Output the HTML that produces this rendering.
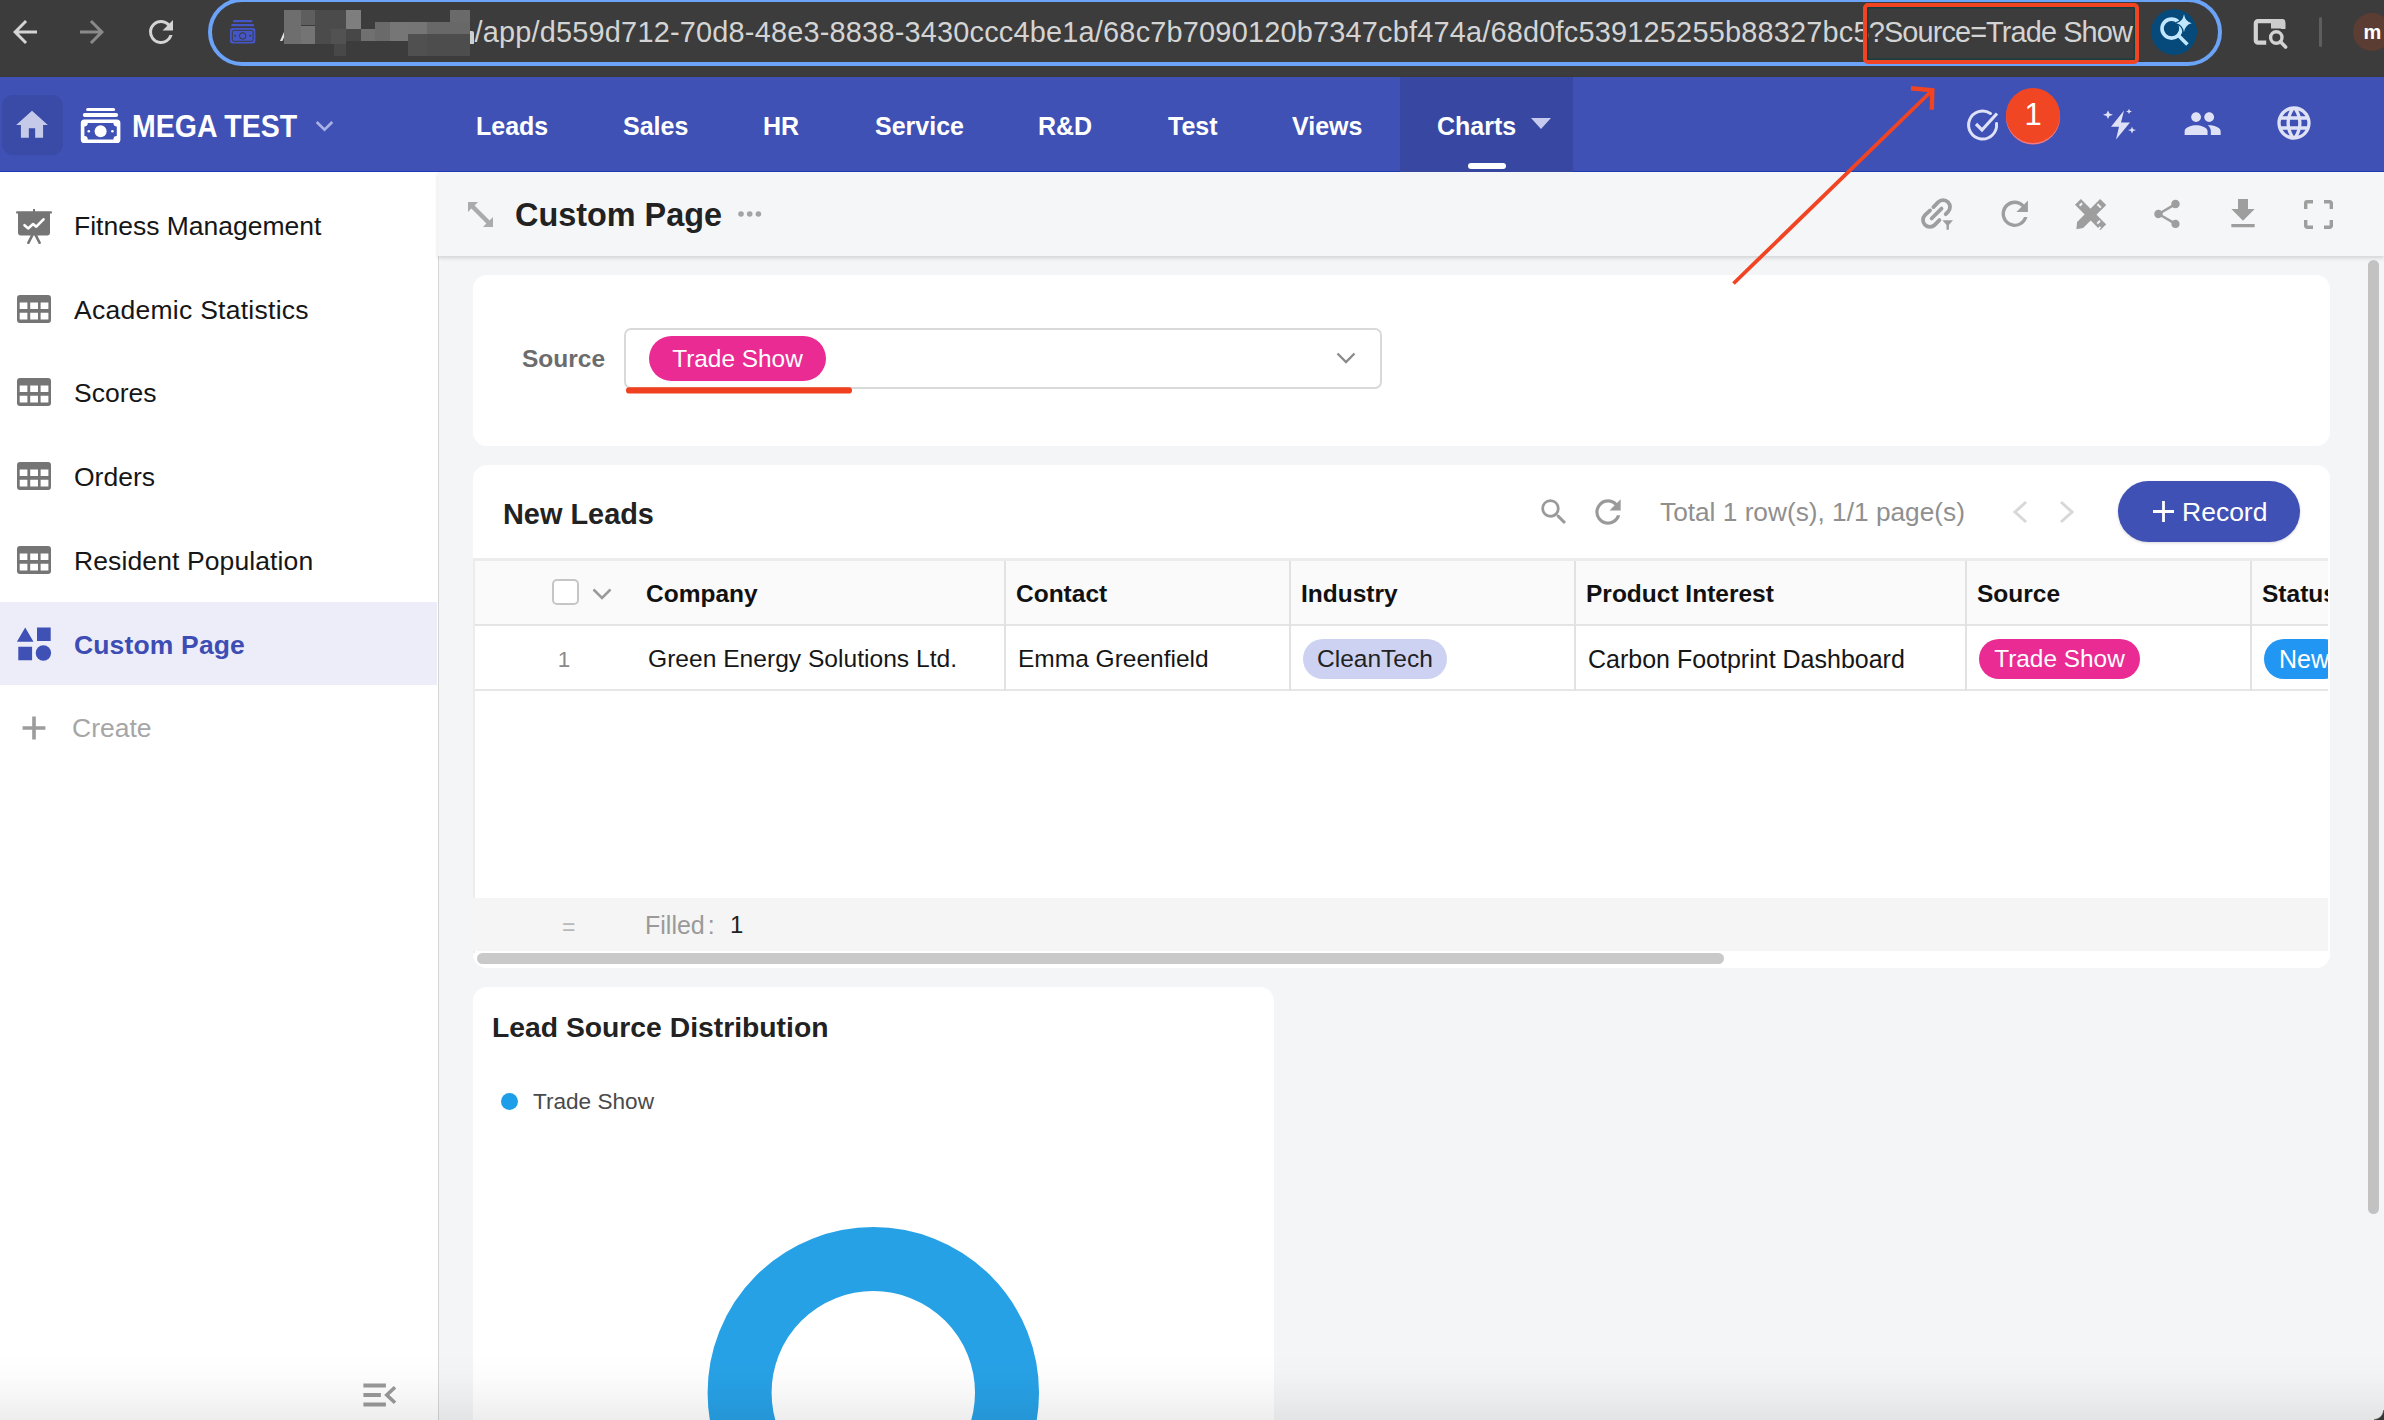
<!DOCTYPE html>
<html lang="en">
<head>
<meta charset="utf-8">
<title>Custom Page</title>
<style>
*{box-sizing:border-box;margin:0;padding:0}
html,body{width:2384px;height:1420px;overflow:hidden;background:#f4f5f7;font-family:"Liberation Sans",Arial,sans-serif;color:#151515}
.abs{position:absolute}
#chrome{position:absolute;left:0;top:0;width:2384px;height:77px;background:#3c3c3c}
#urlbar{position:absolute;left:208px;top:-2px;width:2014px;height:68px;border:4px solid #6ba3f8;border-radius:35px;background:#3c3c3c}
#urltext{position:absolute;left:474.500px;top:15px;font-size:28.9px;line-height:34px;color:#d4d4d4;white-space:nowrap;letter-spacing:0.203px}
#urltext b{font-weight:400;letter-spacing:-0.890px;margin-left:-1px}
#appbar{position:absolute;left:0;top:77px;width:2384px;height:95px;background:#3f51b5;border-bottom:1.500px solid #2039b6;box-shadow:0 2px 4px rgba(0,0,0,.22)}
#homebtn{position:absolute;left:1.500px;top:17.600px;width:61px;height:60.700px;border-radius:11px;background:#3a4aa7}
.nav{position:absolute;top:34px;font-size:25px;font-weight:700;color:#fff;line-height:30px;white-space:nowrap}
#appname{position:absolute;left:132px;top:30.500px;font-size:30.500px;font-weight:700;color:#fff;line-height:36px;white-space:nowrap;transform:scaleX(.934);transform-origin:0 50%}
#activetab{position:absolute;left:1400px;top:0;width:173px;height:95px;background:#3848a2}
#activeline{position:absolute;left:1468px;top:86px;width:38px;height:6px;border-radius:3px;background:#fff}
#sidebar{position:absolute;left:0;top:172px;width:438.500px;height:1248px;background:#fff;border-right:1.500px solid #d6d6d6}
.sitem{position:absolute;left:0;width:437px;height:84px}
.sitem span{position:absolute;left:74px;top:27px;font-size:26.5px;line-height:32px;color:#161616;white-space:nowrap}
.sitem svg{position:absolute;left:16px;top:25px}
#sel{background:#ededf9;height:83px}
#sel span{color:#3d4db3;font-weight:700}
#pagehead{position:absolute;left:438px;top:172px;width:1946px;height:84px;background:#f5f6f8;box-shadow:0 2px 4px rgba(0,0,0,.14)}
#pagetitle{position:absolute;left:77px;top:24px;font-size:32.400px;font-weight:700;color:#222;line-height:38px;white-space:nowrap}
.card{position:absolute;background:#fff;border-radius:14px}
.pill{position:absolute;border-radius:40px;color:#fff;white-space:nowrap;text-align:center}
.th{position:absolute;top:20px;font-size:24.5px;font-weight:700;color:#111;line-height:30px;white-space:nowrap}
.td{position:absolute;top:19px;font-size:25px;color:#161616;line-height:30px;white-space:nowrap}
.vline{position:absolute;top:0;width:1.600px;height:130px;background:#e2e2e2}
</style>
</head>
<body>

<!-- ================= BROWSER CHROME ================= -->
<div id="chrome">
  <svg class="abs" style="left:6.500px;top:14px" width="36" height="36" viewBox="0 0 24 24"><path d="M20 11H7.8l5.6-5.6L12 4l-8 8 8 8 1.4-1.4L7.8 13H20z" fill="#d4d4d4"/></svg>
  <svg class="abs" style="left:74px;top:14px" width="36" height="36" viewBox="0 0 24 24"><path d="M4 11h12.2l-5.6-5.6L12 4l8 8-8 8-1.4-1.4 5.6-5.6H4z" fill="#8a8a8a"/></svg>
  <svg class="abs" style="left:143px;top:14px" width="36" height="36" viewBox="0 0 24 24"><path d="M17.65 6.35A7.95 7.95 0 0 0 12 4a8 8 0 1 0 7.73 10h-2.08A6 6 0 1 1 12 6c1.66 0 3.14.69 4.22 1.78L13 11h7V4z" fill="#d4d4d4"/></svg>
  <div id="urlbar"></div>
  <!-- favicon -->
  <svg class="abs" style="left:230px;top:20px" width="26" height="24" viewBox="0 0 26 24"><rect x="3" y="0" width="19.500" height="2.200" rx="1" fill="#4456c8"/><rect x="1.200" y="4" width="23" height="2.200" rx="1" fill="#4456c8"/><rect x="0" y="8" width="25.400" height="15.600" rx="2.400" fill="#4456c8"/><rect x="2.300" y="10.300" width="20.800" height="11" rx="1.500" fill="none" stroke="#3c3c3c" stroke-width="1"/><circle cx="12.700" cy="15.800" r="3.600" fill="#3c3c3c"/><circle cx="12.700" cy="15.800" r="2.600" fill="#4456c8"/><circle cx="5.200" cy="15.800" r="1" fill="#3c3c3c"/><circle cx="20.200" cy="15.800" r="1" fill="#3c3c3c"/></svg>
  <!-- pixelated host -->
  <div class="abs" style="left:0;top:0;width:520px;height:70px;overflow:hidden">
    <div class="abs" style="left:280px;top:31px;width:8px;height:10px;background:#e4e4e4;clip-path:polygon(55% 0,100% 0,100% 100%,70% 100%,60% 45%,30% 100%,0 100%)"></div>
    <div class="abs" style="left:283.9px;top:10.1px;width:17.4px;height:33.6px;background:#6e6e6e"></div>
    <div class="abs" style="left:301.3px;top:10.1px;width:13.4px;height:15.4px;background:#5e5e5e"></div>
    <div class="abs" style="left:301.3px;top:25.5px;width:13.4px;height:18.1px;background:#747474"></div>
    <div class="abs" style="left:314.8px;top:10.1px;width:30.9px;height:33.6px;background:#4b4b4b"></div>
    <div class="abs" style="left:330.9px;top:28.9px;width:14.8px;height:14.8px;background:#525252"></div>
    <div class="abs" style="left:334.2px;top:43.6px;width:11.4px;height:12.1px;background:#484848"></div>
    <div class="abs" style="left:345.6px;top:10.1px;width:15.4px;height:18.8px;background:#7e7e7e"></div>
    <div class="abs" style="left:345.6px;top:28.9px;width:15.4px;height:12.1px;background:#474747"></div>
    <div class="abs" style="left:361.1px;top:28.9px;width:14.1px;height:12.1px;background:#707070"></div>
    <div class="abs" style="left:375.2px;top:22.1px;width:14.8px;height:18.8px;background:#6a6a6a"></div>
    <div class="abs" style="left:389.9px;top:22.1px;width:18.1px;height:18.8px;background:#767676"></div>
    <div class="abs" style="left:408.1px;top:22.1px;width:18.8px;height:12.1px;background:#757575"></div>
    <div class="abs" style="left:408.1px;top:34.2px;width:18.8px;height:21.5px;background:#505050"></div>
    <div class="abs" style="left:426.8px;top:22.1px;width:43.0px;height:12.1px;background:#686868"></div>
    <div class="abs" style="left:426.8px;top:34.2px;width:43.0px;height:21.5px;background:#4d4d4d"></div>
    <div class="abs" style="left:449.7px;top:10.1px;width:20.1px;height:12.1px;background:#6a6a6a"></div>
  </div>
  <div class="abs" style="left:470px;top:31px;width:3.500px;height:13px;background:#cfcfcf;border-radius:0 2px 0 0"></div>
  <div id="urltext">/app/d559d712-70d8-48e3-8838-3430ccc4be1a/68c7b7090120b7347cbf474a/68d0fc539125255b88327bc5<b>?Source=Trade Show</b></div>
  <!-- red highlight box -->
  <div class="abs" style="left:1863px;top:3px;width:276px;height:61px;border:4px solid #f04423;border-radius:5px;box-shadow:inset 0 0 0 1.5px #163c3c"></div>
  <!-- lens icon -->
  <div class="abs" style="left:2151.100px;top:8.900px;width:46px;height:46px;border-radius:23px;background:#054a7a"></div>
  <svg class="abs" style="left:2156px;top:13px" width="40" height="38" viewBox="0 0 40 38"><circle cx="15.500" cy="15.600" r="9.500" fill="none" stroke="#c2e7ff" stroke-width="3.600"/><path d="M22.200 22.300L31.400 31.500" stroke="#c2e7ff" stroke-width="3.600" fill="none"/><path d="M28 1.300Q29.300 8.900 35.700 10.200Q29.300 11.500 28 19.100Q26.700 11.500 20.300 10.200Q26.700 8.900 28 1.300z" fill="#c2e7ff" stroke="#054a7a" stroke-width="2.600" paint-order="stroke"/></svg>
  <!-- cast/search icon -->
  <svg class="abs" style="left:2250px;top:16px" width="40" height="36" viewBox="0 0 40 36"><path d="M16.200 26.600H8a2.200 2.200 0 0 1-2.200-2.200V7.400a2.200 2.200 0 0 1 2.200-2.200H31a2.200 2.200 0 0 1 2.200 2.200V13" fill="none" stroke="#d2d2d2" stroke-width="4.200"/><path d="M21 3.100h11.300a3 3 0 0 1 3 3v6.500H21z" fill="#cdcdcd"/><circle cx="26.300" cy="21.500" r="5.700" fill="#3c3c3c" stroke="#d2d2d2" stroke-width="3.400"/><path d="M30.300 25.600L35.600 31" stroke="#d2d2d2" stroke-width="3.600" stroke-linecap="round"/></svg>
  <div class="abs" style="left:2319px;top:17px;width:3px;height:30px;background:#5e5e5e;border-radius:2px"></div>
  <div class="abs" style="left:2352.600px;top:12.500px;width:38.700px;height:38.700px;border-radius:20px;background:#5c3d33"></div>
  <div class="abs" style="left:2363.500px;top:14.500px;font-size:20px;font-weight:700;line-height:34px;color:#fff">m</div>
</div>

<!-- ================= APP BAR ================= -->
<div id="appbar">
  <div id="homebtn"></div>
  <svg class="abs" style="left:13px;top:28.500px" width="38" height="38" viewBox="0 0 24 24"><path d="M10 20v-6h4v6h5v-8h3L12 3 2 12h3v8z" fill="#c5cae9"/></svg>
  <!-- money icon -->
  <svg class="abs" style="left:80px;top:28px" width="42" height="40" viewBox="0 0 42 40"><rect x="6.100" y="2.900" width="29" height="3" rx="1.500" fill="#fff"/><rect x="2.800" y="8" width="35.300" height="4" rx="2" fill="#fff"/><rect x="0.800" y="14.500" width="39.600" height="23.500" rx="3.600" fill="#fff"/><path d="M7.800 18h25.600a3.400 3.400 0 0 0 3.400 3.400v9.600a3.400 3.400 0 0 0-3.400 3.400H7.800a3.400 3.400 0 0 0-3.400-3.400v-9.600A3.400 3.400 0 0 0 7.800 18z" fill="#3f51b5"/><circle cx="20.600" cy="26.200" r="6" fill="#fff"/><circle cx="8.800" cy="26.200" r="1.300" fill="#fff"/><circle cx="32.400" cy="26.200" r="1.300" fill="#fff"/></svg>
  <div id="appname">MEGA TEST</div>
  <svg class="abs" style="left:315px;top:42.500px" width="19" height="12" viewBox="0 0 19 12"><path d="M1.700 2l7.800 7.600L17.300 2" fill="none" stroke="#aab2e4" stroke-width="2.700"/></svg>
  <div id="activetab"></div>
  <div class="nav" style="left:476px">Leads</div>
  <div class="nav" style="left:623px">Sales</div>
  <div class="nav" style="left:763px">HR</div>
  <div class="nav" style="left:875px">Service</div>
  <div class="nav" style="left:1038px">R&amp;D</div>
  <div class="nav" style="left:1168px">Test</div>
  <div class="nav" style="left:1292px">Views</div>
  <div class="nav" style="left:1437px">Charts</div>
  <svg class="abs" style="left:1531px;top:41px" width="20" height="12" viewBox="0 0 20 12"><path d="M0 0h20L10 11z" fill="#c5caee"/></svg>
  <div id="activeline"></div>
  <!-- right icons -->
  <svg class="abs" style="left:1965px;top:30px" width="36" height="36" viewBox="0 0 36 36"><path d="M31.5 16.5a14 14 0 1 1-6-10" fill="none" stroke="#dfe2f6" stroke-width="3" stroke-linecap="round"/><path d="M11 17l6 6L32 6.5" fill="none" stroke="#dfe2f6" stroke-width="3.2"/></svg>
  <div class="abs" style="left:2006px;top:11px;width:54px;height:55px;border-radius:28px;background:#f04623;box-shadow:0 1.500px 0 #f27a80"></div>
  <div class="abs" style="left:2006px;top:18px;width:54px;text-align:center;font-size:31px;line-height:40px;color:#fff">1</div>
  <svg class="abs" style="left:2102px;top:30.800px" width="36" height="34" viewBox="0 0 36 40" preserveAspectRatio="none"><path d="M22 3L9 22h8l-3 15 14-20h-9z" fill="#dfe2f6"/><path d="M6 3l1.4 3.6L11 8l-3.6 1.4L6 13 4.600 9.400 1 8l3.600-1.400z" fill="#dfe2f6"/><path d="M27 1l.9 2.100L30 4l-2.100.9L27 7l-.9-2.100L24 4l2.100-.9z" fill="#dfe2f6"/><path d="M30 22l1.100 2.900L34 26l-2.900 1.100L30 30l-1.100-2.900L26 26l2.900-1.100z" fill="#dfe2f6"/></svg>
  <svg class="abs" style="left:2183.200px;top:26.600px" width="39.300" height="39.300" viewBox="0 0 24 24"><path d="M16 11c1.660 0 2.990-1.340 2.990-3S17.660 5 16 5c-1.660 0-3 1.340-3 3s1.340 3 3 3zm-8 0c1.660 0 2.990-1.340 2.990-3S9.660 5 8 5C6.340 5 5 6.340 5 8s1.340 3 3 3zm0 2c-2.330 0-7 1.170-7 3.500V19h14v-2.500c0-2.330-4.670-3.500-7-3.500zm8 0c-.29 0-.62.020-.97.050 1.160.84 1.970 1.970 1.970 3.450V19h6v-2.500c0-2.330-4.670-3.500-7-3.500z" fill="#dfe2f6"/></svg>
  <svg class="abs" style="left:2274px;top:26px" width="40" height="40" viewBox="0 0 24 24"><path d="M11.990 2C6.470 2 2 6.480 2 12s4.470 10 9.990 10C17.520 22 22 17.520 22 12S17.520 2 11.990 2zm6.930 6h-2.950a15.650 15.650 0 0 0-1.380-3.560A8.030 8.030 0 0 1 18.920 8zM12 4.040c.83 1.200 1.480 2.530 1.910 3.960h-3.820c.43-1.430 1.080-2.760 1.910-3.960zM4.260 14C4.100 13.360 4 12.690 4 12s.1-1.360.26-2h3.380c-.08.660-.14 1.320-.14 2 0 .68.060 1.340.14 2H4.260zm.82 2h2.950c.32 1.250.78 2.450 1.380 3.560A7.990 7.990 0 0 1 5.080 16zm2.950-8H5.080a7.990 7.990 0 0 1 4.330-3.560A15.650 15.650 0 0 0 8.030 8zM12 19.960c-.83-1.200-1.480-2.530-1.910-3.960h3.820c-.43 1.430-1.080 2.760-1.910 3.960zM14.340 14H9.660c-.09-.66-.16-1.320-.16-2 0-.68.070-1.350.16-2h4.680c.09.650.16 1.320.16 2 0 .68-.07 1.340-.16 2zm.25 5.560c.6-1.110 1.060-2.310 1.380-3.560h2.950a8.030 8.030 0 0 1-4.330 3.560zM16.360 14c.08-.66.140-1.320.14-2 0-.68-.06-1.340-.14-2h3.380c.16.640.26 1.310.26 2s-.1 1.360-.26 2h-3.380z" fill="#dfe2f6"/></svg>
</div>

<!-- ================= SIDEBAR ================= -->
<div id="sidebar">
  <div class="sitem" style="top:11px"><svg width="36" height="36" viewBox="0 0 36 36" style="left:16px;top:26px"><path fill="#757575" d="M17 0h2v2.200h15.800a1.200 1.200 0 0 1 0 2.400H34v19.400a2.400 2.400 0 0 1-2.400 2.400H21.300l3.500 6.800a1.300 1.300 0 0 1-2.300 1.200L18.400 26.600h-.8L13.500 34.400a1.300 1.300 0 0 1-2.300-1.200l3.500-6.800H4.400A2.400 2.400 0 0 1 2 24V4.600H1.200a1.200 1.200 0 0 1 0-2.400H17z"/><path d="M8.500 16.200l3.600 3.200 5-4.300 3.200 2.600 7.200-7.400" fill="none" stroke="#fff" stroke-width="2.600" stroke-linecap="round" stroke-linejoin="round"/></svg><span>Fitness Management</span></div>
  <div class="sitem" style="top:95px"><svg width="34" height="28" viewBox="0 0 34 28" style="left:17px;top:28px"><path fill-rule="evenodd" fill="#757575" d="M3 0h28a3 3 0 0 1 3 3v22a3 3 0 0 1-3 3H3a3 3 0 0 1-3-3V3a3 3 0 0 1 3-3zM2.700 7.400v6.600h7.700V7.400zM13.200 7.400v6.600h7.800V7.400zM23.600 7.400v6.600h7.800V7.400zM2.700 17.800v6.800h7.700v-6.800zM13.200 17.800v6.800h7.800v-6.800zM23.600 17.800v6.800h7.800v-6.800z"/></svg><span style="letter-spacing:.27px">Academic Statistics</span></div>
  <div class="sitem" style="top:178px"><svg width="34" height="28" viewBox="0 0 34 28" style="left:17px;top:28px"><path fill-rule="evenodd" fill="#757575" d="M3 0h28a3 3 0 0 1 3 3v22a3 3 0 0 1-3 3H3a3 3 0 0 1-3-3V3a3 3 0 0 1 3-3zM2.700 7.400v6.600h7.700V7.400zM13.200 7.400v6.600h7.800V7.400zM23.600 7.400v6.600h7.800V7.400zM2.700 17.800v6.800h7.700v-6.800zM13.200 17.800v6.800h7.800v-6.800zM23.600 17.800v6.800h7.800v-6.800z"/></svg><span>Scores</span></div>
  <div class="sitem" style="top:262px"><svg width="34" height="28" viewBox="0 0 34 28" style="left:17px;top:28px"><path fill-rule="evenodd" fill="#757575" d="M3 0h28a3 3 0 0 1 3 3v22a3 3 0 0 1-3 3H3a3 3 0 0 1-3-3V3a3 3 0 0 1 3-3zM2.700 7.400v6.600h7.700V7.400zM13.200 7.400v6.600h7.800V7.400zM23.600 7.400v6.600h7.800V7.400zM2.700 17.800v6.800h7.700v-6.800zM13.200 17.800v6.800h7.800v-6.800zM23.600 17.800v6.800h7.800v-6.800z"/></svg><span>Orders</span></div>
  <div class="sitem" style="top:346px"><svg width="34" height="28" viewBox="0 0 34 28" style="left:17px;top:28px"><path fill-rule="evenodd" fill="#757575" d="M3 0h28a3 3 0 0 1 3 3v22a3 3 0 0 1-3 3H3a3 3 0 0 1-3-3V3a3 3 0 0 1 3-3zM2.700 7.400v6.600h7.700V7.400zM13.200 7.400v6.600h7.800V7.400zM23.600 7.400v6.600h7.800V7.400zM2.700 17.800v6.800h7.700v-6.800zM13.200 17.800v6.800h7.800v-6.800zM23.600 17.800v6.800h7.800v-6.800z"/></svg><span style="letter-spacing:.11px">Resident Population</span></div>
  <div class="sitem" id="sel" style="top:430px"><svg width="36" height="36" viewBox="0 0 36 36" style="left:16px;top:24px"><path fill="#3f51b5" d="M9.200 1.600L17.500 15.700H.900zM21 1.600h13.700v13.500H21zM2.300 20.800h13.800v13.500H2.300z"/><circle cx="27.400" cy="27" r="7.700" fill="#3f51b5"/></svg><span style="letter-spacing:.15px">Custom Page</span></div>
  <div class="sitem" style="top:514px"><svg width="24" height="24" viewBox="0 0 24 24" style="left:22px;top:30px"><path d="M12 .6v22.800M.6 12h22.800" stroke="#9c9c9c" stroke-width="3.600" fill="none"/></svg><span style="color:#a6a6a6;left:72px;top:26px">Create</span></div>
  <svg class="abs" style="left:362px;top:1211px" width="36" height="24" viewBox="0 0 36 24"><path d="M1.400 2.500h22.500M1.400 12h17.500M1.400 21.500h22.500" stroke="#999" stroke-width="3.800" fill="none"/><path d="M33 4.300L24.800 12l8.200 7.700" stroke="#999" stroke-width="3.600" fill="none"/></svg>
</div>

<!-- ================= PAGE HEADER ================= -->
<div id="pagehead">
  <svg class="abs" style="left:30px;top:30px" width="25" height="25" viewBox="0 0 25 25"><path d="M0 0h10L6.600 3.400 21.600 18.400 25 15v10H15l3.400-3.400L3.400 6.600 0 10z" fill="#ababab"/></svg>
  <div id="pagetitle">Custom Page</div>
  <svg class="abs" style="left:299px;top:38px" width="26" height="8" viewBox="0 0 26 8"><circle cx="4" cy="4" r="2.800" fill="#a4a4a4"/><circle cx="12.700" cy="4" r="2.800" fill="#a4a4a4"/><circle cx="21.400" cy="4" r="2.800" fill="#a4a4a4"/></svg>
  <!-- link + filter -->
  <svg class="abs" style="left:1481px;top:24px" width="38" height="36" viewBox="0 0 38 36"><g fill="none" stroke="#9e9e9e" stroke-width="3.800" stroke-linecap="round"><path d="M14.400 11.100L19.230 6.130a6.900 6.900 0 0 1 9.760 9.760l-2.300 2.300"/><path d="M20.400 24.100L15.770 28.870a6.900 6.900 0 0 1-9.760-9.760L11.100 14.400"/><path d="M12.600 22.500L22.500 12.600"/></g><path d="M23.400 24.200h10.600l-4.100 4.700v4.900h-2.400v-4.900z" fill="#9e9e9e"/></svg>
  <!-- refresh -->
  <svg class="abs" style="left:1557.200px;top:22px" width="39.500" height="39.500" viewBox="0 0 24 24"><path d="M17.650 6.350A7.950 7.950 0 0 0 12 4a8 8 0 1 0 7.730 10h-2.080A6 6 0 1 1 12 6c1.660 0 3.140.69 4.220 1.780L13 11h7V4z" fill="#9e9e9e"/></svg>
  <!-- design (ruler+pencil) -->
  <svg class="abs" style="left:1636.900px;top:26.700px" width="31.200" height="31.200" viewBox="0 0 33 33"><g fill="#9e9e9e"><path d="M6.200 0L33 26.800 26.800 33 0 6.200z"/><path d="M26.600 0L33 6.400 8.600 30.800 1.500 32l.7-7.600z"/></g><g stroke="#f5f6f8" stroke-width="2" fill="none"><path d="M7.500 4.500l-2.600 2.600M23.500 26l3-3M27 29.500l-2.500 2.500"/><path d="M23.800 5.600l3.600 3.600"/></g></svg>
  <!-- share -->
  <svg class="abs" style="left:1712px;top:25px" width="34" height="34" viewBox="0 0 24 24"><path d="M18 16.080c-.76 0-1.440.3-1.960.77L8.910 12.700c.05-.23.090-.46.090-.7s-.04-.47-.09-.7l7.050-4.110c.54.5 1.250.81 2.040.81 1.660 0 3-1.340 3-3s-1.340-3-3-3-3 1.340-3 3c0 .24.040.47.090.7L8.040 9.810C7.500 9.310 6.790 9 6 9c-1.660 0-3 1.340-3 3s1.340 3 3 3c.79 0 1.500-.31 2.040-.81l7.120 4.160c-.05.21-.08.430-.08.650 0 1.610 1.310 2.920 2.920 2.920 1.610 0 2.920-1.310 2.920-2.920s-1.310-2.920-2.920-2.920z" fill="#9e9e9e"/></svg>
  <!-- download -->
  <svg class="abs" style="left:1785px;top:22px" width="40" height="40" viewBox="0 0 24 24"><path d="M19 9h-4V3H9v6H5l7 7 7-7zM5 18v2h14v-2H5z" fill="#9e9e9e"/></svg>
  <!-- fullscreen -->
  <svg class="abs" style="left:1866px;top:28px" width="29" height="29" viewBox="0 0 29 29"><path d="M1.700 9V3.200a1.500 1.500 0 0 1 1.500-1.500H9M20 1.700h5.800a1.500 1.500 0 0 1 1.500 1.500V9M27.300 20v5.800a1.500 1.500 0 0 1-1.500 1.500H20M9 27.300H3.200a1.500 1.500 0 0 1-1.500-1.500V20" fill="none" stroke="#9e9e9e" stroke-width="3.400"/></svg>
</div>

<!-- ================= FILTER CARD ================= -->
<div class="card" id="fcard" style="left:473px;top:275px;width:1857px;height:171px">
  <div class="abs" style="left:49px;top:69px;font-size:24.500px;font-weight:700;color:#6c6c6c;line-height:30px">Source</div>
  <div class="abs" style="left:151px;top:53px;width:758px;height:61px;border:2px solid #d9d9d9;border-radius:7px"></div>
  <div class="pill" style="left:176px;top:61px;width:177px;height:45px;background:#e92b93;font-size:24.400px;line-height:45px">Trade Show</div>
  <svg class="abs" style="left:863px;top:77px" width="20" height="13" viewBox="0 0 20 13"><path d="M1.500 1.500L10 10l8.500-8.500" fill="none" stroke="#8a8a8a" stroke-width="2.300"/></svg>
</div>

<!-- ================= TABLE CARD ================= -->
<div class="card" id="tcard" style="left:473px;top:465px;width:1857px;height:503px;overflow:hidden">
  <div class="abs" style="left:30px;top:31px;font-size:28.900px;font-weight:700;color:#222;line-height:36px">New Leads</div>
  <!-- search -->
  <svg class="abs" style="left:1064px;top:30px" width="34" height="34" viewBox="0 0 24 24"><path d="M15.500 14h-.79l-.28-.27A6.470 6.470 0 0 0 16 9.500 6.500 6.500 0 1 0 9.500 16c1.610 0 3.090-.59 4.230-1.570l.27.28v.79l5 4.990L20.490 19l-4.990-5zm-6 0C7.010 14 5 11.990 5 9.500S7.010 5 9.500 5 14 7.010 14 9.500 11.990 14 9.500 14z" fill="#9a9a9a"/></svg>
  <!-- refresh -->
  <svg class="abs" style="left:1116px;top:28px" width="38" height="38" viewBox="0 0 24 24"><path d="M17.650 6.350A7.950 7.950 0 0 0 12 4a8 8 0 1 0 7.730 10h-2.080A6 6 0 1 1 12 6c1.660 0 3.140.69 4.220 1.780L13 11h7V4z" fill="#9a9a9a"/></svg>
  <div class="abs" style="left:1187px;top:31px;font-size:26.250px;color:#8f8f8f;line-height:32px;white-space:nowrap">Total 1 row(s), 1/1 page(s)</div>
  <svg class="abs" style="left:1538px;top:35px" width="18" height="24" viewBox="0 0 18 24"><path d="M15 2L4 12l11 10" fill="none" stroke="#d8d8d8" stroke-width="3"/></svg>
  <svg class="abs" style="left:1585px;top:35px" width="18" height="24" viewBox="0 0 18 24"><path d="M3 2l11 10L3 22" fill="none" stroke="#d8d8d8" stroke-width="3"/></svg>
  <div class="abs" style="left:1645px;top:16px;width:182px;height:61px;border-radius:31px;background:#3f51b5;box-shadow:0 1px 3px rgba(0,0,0,.16)"></div>
  <svg class="abs" style="left:1680px;top:36px" width="21" height="21" viewBox="0 0 21 21"><path d="M10.500 0v21M0 10.500h21" stroke="#fff" stroke-width="2.800" fill="none"/></svg>
  <div class="abs" style="left:1709px;top:31px;font-size:26.500px;color:#fff;line-height:32px">Record</div>

  <!-- header row -->
  <div class="abs" style="left:0;top:93px;width:1857px;height:68px;background:#fafafa;border-top:3px solid #ececec;border-bottom:2px solid #e4e4e4"></div>
  <div class="abs" style="left:79px;top:114px;width:27px;height:26px;border:2px solid #c6c6c6;border-radius:5px;background:#fff"></div>
  <svg class="abs" style="left:119px;top:123px" width="20" height="13" viewBox="0 0 20 13"><path d="M1.500 1.500L10 10l8.500-8.500" fill="none" stroke="#9a9a9a" stroke-width="2.600"/></svg>
  <div class="th" style="left:173px;top:114px">Company</div>
  <div class="th" style="left:543px;top:114px">Contact</div>
  <div class="th" style="left:828px;top:114px">Industry</div>
  <div class="th" style="left:1113px;top:114px">Product Interest</div>
  <div class="th" style="left:1504px;top:114px">Source</div>
  <div class="th" style="left:1789px;top:114px">Status</div>
  <!-- data row -->
  <div class="abs" style="left:0;top:224px;width:1857px;height:2px;background:#e6e6e6"></div>
  <div class="td" style="left:84px;top:180px;color:#8a8a8a;width:14px;text-align:center;font-size:22.500px">1</div>
  <div class="td" style="left:175px;top:179px;font-size:24.600px">Green Energy Solutions Ltd.</div>
  <div class="td" style="left:545px;top:179px;font-size:24.500px">Emma Greenfield</div>
  <div class="pill" style="left:830px;top:174px;width:144px;height:40px;background:#cdd2f3;color:#222;font-size:24.500px;line-height:40px">CleanTech</div>
  <div class="td" style="left:1115px;top:179px">Carbon Footprint Dashboard</div>
  <div class="pill" style="left:1506px;top:174px;width:161px;height:40px;background:#e92b93;font-size:24.400px;line-height:40px">Trade Show</div>
  <div class="pill" style="left:1791px;top:174px;width:80px;height:40px;background:#2196f3;font-size:25px;line-height:40px">New</div>
  <!-- col separators -->
  <div class="vline" style="left:531px;top:96px"></div>
  <div class="vline" style="left:816px;top:96px"></div>
  <div class="vline" style="left:1101px;top:96px"></div>
  <div class="vline" style="left:1492px;top:96px"></div>
  <div class="vline" style="left:1777px;top:96px"></div>
  <!-- left edge line -->
  <div class="abs" style="left:0;top:93px;width:2px;height:395px;background:#ececec"></div>
  <!-- footer -->
  <div class="abs" style="left:0;top:433px;width:1857px;height:53px;background:#f5f5f5"></div>
  <div class="abs" style="left:89px;top:447px;font-size:23px;color:#b8b8b8;line-height:30px">=</div>
  <div class="abs" style="left:172px;top:445px;font-size:25px;color:#9a9a9a;line-height:30px;white-space:nowrap">Filled<span style="margin-left:3px">:</span></div>
  <div class="abs" style="left:257px;top:445px;font-size:24px;color:#222;line-height:30px">1</div>
  <div class="abs" style="left:4px;top:488px;width:1247px;height:11px;border-radius:5.500px;background:#c9c9c9"></div>
  <!-- right clip strip -->
  <div class="abs" style="left:1855px;top:0;width:2px;height:503px;background:#fff"></div>
</div>

<!-- ================= CHART CARD ================= -->
<div class="card" id="ccard" style="left:473px;top:987px;width:801px;height:460px;overflow:hidden">
  <div class="abs" style="left:19px;top:23px;font-size:28.300px;font-weight:700;color:#222;line-height:34px;white-space:nowrap">Lead Source Distribution</div>
  <div class="abs" style="left:28px;top:106px;width:17px;height:17px;border-radius:9px;background:#1c9fe8"></div>
  <div class="abs" style="left:60px;top:101px;font-size:22.600px;color:#4a4a4a;line-height:28px;white-space:nowrap">Trade Show</div>
  <svg class="abs" style="left:200px;top:221px" width="400" height="240" viewBox="0 0 400 240"><circle cx="200.300" cy="184.700" r="133.700" fill="none" stroke="#27a1e6" stroke-width="64"/></svg>
</div>

<!-- ================= SCROLLBAR / ANNOTATIONS ================= -->
<div class="abs" style="left:2368px;top:260px;width:11px;height:953.500px;border-radius:5.500px;background:#c2c2c2"></div>
<div class="abs" style="left:2374px;top:1410px;width:10px;height:10px;background:radial-gradient(circle at 0 0,rgba(0,0,0,0) 8.500px,#3a3a3a 10px)"></div>
<svg class="abs" style="left:0;top:0;pointer-events:none" width="2384" height="1420" viewBox="0 0 2384 1420">
  <path d="M1733.500 283.500L1931 91.500" stroke="#f04423" stroke-width="3.800" fill="none" stroke-linecap="butt"/>
  <path d="M1911 88.300L1932.300 90.300L1931.800 109.800" stroke="#f04423" stroke-width="4.400" fill="none" stroke-linecap="butt" stroke-linejoin="miter"/>
  <rect x="626" y="387.200" width="226" height="6.300" rx="3.100" fill="#f0401f"/>
</svg>
<div class="abs" style="left:0;top:1352px;width:2384px;height:68px;background:linear-gradient(to bottom,rgba(0,0,0,0),rgba(0,0,0,.012) 35%,rgba(0,0,0,.035) 65%,rgba(0,0,0,.07));pointer-events:none"></div>

</body>
</html>
